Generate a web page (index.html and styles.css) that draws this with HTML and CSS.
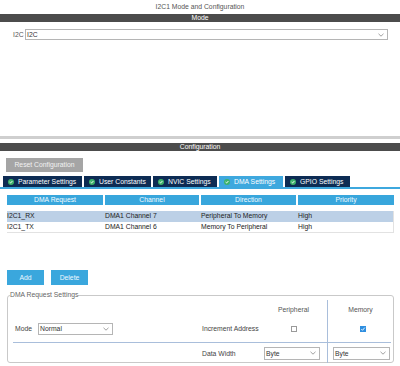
FILE: index.html
```html
<!DOCTYPE html>
<html>
<head>
<meta charset="utf-8">
<link rel="stylesheet" href="styles.css">
</head>
<body>
<div class="title">I2C1 Mode and Configuration</div>
<div class="bar">Mode</div>
<div class="mode-body">
  <div class="mode-row">
    <span class="lbl">I2C</span>
    <div class="select wide"><span>I2C</span><svg class="chev" width="6" height="4" viewBox="0 0 6 4"><path d="M0.5 0.8 L3 3.2 L5.5 0.8" fill="none" stroke="#888" stroke-width="0.8"/></svg></div>
  </div>
</div>
<div class="splitter"></div>
<div class="bar config-bar">Configuration</div>
<div class="config-body">
  <div class="reset">Reset Configuration</div>
  <div class="tabs">
    <div class="tab t1"><svg class="ok" viewBox="0 0 6 6"><circle cx="3" cy="3" r="3" fill="#3db36b"/><path d="M1.6 3.1 L2.6 4 L4.4 2" fill="none" stroke="#fff" stroke-width="0.9"/></svg>Parameter Settings</div>
    <div class="tab t2"><svg class="ok" viewBox="0 0 6 6"><circle cx="3" cy="3" r="3" fill="#3db36b"/><path d="M1.6 3.1 L2.6 4 L4.4 2" fill="none" stroke="#fff" stroke-width="0.9"/></svg>User Constants</div>
    <div class="tab t3"><svg class="ok" viewBox="0 0 6 6"><circle cx="3" cy="3" r="3" fill="#3db36b"/><path d="M1.6 3.1 L2.6 4 L4.4 2" fill="none" stroke="#fff" stroke-width="0.9"/></svg>NVIC Settings</div>
    <div class="tab t4 active"><svg class="ok" viewBox="0 0 6 6"><circle cx="3" cy="3" r="3" fill="#3db36b"/><path d="M1.6 3.1 L2.6 4 L4.4 2" fill="none" stroke="#fff" stroke-width="0.9"/></svg>DMA Settings</div>
    <div class="tab t5"><svg class="ok" viewBox="0 0 6 6"><circle cx="3" cy="3" r="3" fill="#3db36b"/><path d="M1.6 3.1 L2.6 4 L4.4 2" fill="none" stroke="#fff" stroke-width="0.9"/></svg>GPIO Settings</div>
  </div>
  <div class="tabline"></div>
  <div class="table">
    <div class="thead">
      <div>DMA Request</div><div>Channel</div><div>Direction</div><div>Priority</div>
    </div>
    <div class="tbody">
      <div class="trow sel"><div>I2C1_RX</div><div>DMA1 Channel 7</div><div>Peripheral To Memory</div><div>High</div></div>
      <div class="trow"><div>I2C1_TX</div><div>DMA1 Channel 6</div><div>Memory To Peripheral</div><div>High</div></div>
    </div>
  </div>
  <div class="buttons">
    <div class="btn">Add</div>
    <div class="btn">Delete</div>
  </div>
  <fieldset class="settings">
    <legend>DMA Request Settings</legend>
    <div class="grid">
      <div class="cell"></div>
      <div class="cell"></div>
      <div class="cell center head">Peripheral</div>
      <div class="cell center head mem">Memory</div>

      <div class="cell"><span class="lbl2">Mode</span><div class="select mode"><span>Normal</span><svg class="chev" width="6" height="4" viewBox="0 0 6 4"><path d="M0.5 0.8 L3 3.2 L5.5 0.8" fill="none" stroke="#888" stroke-width="0.8"/></svg></div></div>
      <div class="cell txt">Increment Address</div>
      <div class="cell center"><span class="cb"></span></div>
      <div class="cell center mem"><svg class="cbx" viewBox="0 0 6 6"><rect width="6" height="6" fill="#2f8fe0"/><path d="M1.3 3.1 L2.5 4.3 L4.8 1.6" fill="none" stroke="#fff" stroke-width="0.9"/></svg></div>

      <div class="hline"></div>

      <div class="cell"></div>
      <div class="cell txt">Data Width</div>
      <div class="cell"><div class="select dw"><span>Byte</span><svg class="chev" width="6" height="4" viewBox="0 0 6 4"><path d="M0.5 0.8 L3 3.2 L5.5 0.8" fill="none" stroke="#888" stroke-width="0.8"/></svg></div></div>
      <div class="cell mem"><div class="select dw2"><span>Byte</span><svg class="chev" width="6" height="4" viewBox="0 0 6 4"><path d="M0.5 0.8 L3 3.2 L5.5 0.8" fill="none" stroke="#888" stroke-width="0.8"/></svg></div></div>
    </div>
  </fieldset>
</div>
</body>
</html>
```
FILE: styles.css
```css
* { box-sizing: border-box; }
html, body { margin: 0; padding: 0; background: #fff; }
body {
  width: 400px;
  height: 366px;
  overflow: hidden;
  font-family: "Liberation Sans", Arial, sans-serif;
  font-size: 6.8px;
  color: #333;
}
.title {
  height: 14px;
  line-height: 14px;
  text-align: center;
  color: #555;
}
.bar {
  height: 8px;
  line-height: 8px;
  background: #4c4c4c;
  color: #fff;
  text-align: center;
}
.mode-body {
  height: 114px;
  padding-top: 7px;
}
.mode-row {
  display: flex;
  align-items: center;
  padding-left: 13px;
}
.lbl { width: 12px; color: #555; }
.select {
  display: flex;
  align-items: center;
  justify-content: space-between;
  background: #fff;
  border: 1px solid #b5b5b5;
  padding: 0 3px 0 1px;
  color: #333;
}
.select.wide { width: 363px; height: 11px; }
.chev { width: 6px; height: 4px; }
.splitter {
  height: 3px;
  background: #cfcfcf;
  margin-bottom: 4px;
}
.config-body { padding-top: 7px; }
.reset {
  margin-left: 6px;
  width: 77px;
  height: 14px;
  line-height: 14px;
  background: #a5a5a5;
  color: #f2f2f2;
  text-align: center;
}
.tabs {
  display: flex;
  gap: 2px;
  margin-top: 4px;
  padding-left: 3px;
  height: 11px;
}
.tab {
  display: flex;
  align-items: center;
  gap: 4px;
  padding-left: 5px;
  background: #0d2c54;
  color: #fff;
  white-space: nowrap;
}
.tab.active { background: #3ea8de; }
.t1 { width: 79px; }
.t2 { width: 67px; }
.t3 { width: 64px; }
.t4 { width: 64px; }
.t5 { width: 65px; }
.ok { width: 6px; height: 6px; flex: none; }
.tabline { height: 2px; background: #3ea8de; }
.table { margin: 6px 6px 0 7px; }
.thead {
  display: grid;
  grid-template-columns: 96px 94px 95px 96px;
  gap: 2px;
  height: 10px;
}
.thead > div {
  background: #38a6dc;
  color: #f4fbff;
  text-align: center;
  line-height: 10px;
}
.tbody {
  margin-top: 6px;
  border: 1px solid #e2e2e2;
  border-top: none;
  border-left: none;
}
.trow {
  display: grid;
  grid-template-columns: 98px 96px 97px 96px;
  height: 10.5px;
  line-height: 10.5px;
  color: #222;
}
.trow.sel { background: #bcd0e6; }
.trow > div { white-space: nowrap; }
.buttons {
  display: flex;
  gap: 7px;
  margin: 37px 0 0 7px;
}
.btn {
  width: 37px;
  height: 15px;
  line-height: 15px;
  background: #3aa7dd;
  color: #eef8ff;
  text-align: center;
}
.settings {
  margin: 6px 6px 0 7px;
  padding: 0;
  min-width: 0;
  border: 1px solid #c9c9c9;
  border-radius: 3px;
  height: 72px;
}
.settings legend {
  padding: 0;
  margin-left: 2px;
  color: #666;
  line-height: 8px;
}
.grid {
  display: grid;
  grid-template-columns: 189px 63px 67px 66px;
  grid-template-rows: 15px 27px 1px 20px;
  margin-top: 1px;
}
.cell { display: flex; align-items: center; }
.center { justify-content: center; }
.mem { border-left: 1px solid #a9bedb; }
.head { color: #555; padding-top: 3px; }
.txt { padding-left: 5px; color: #444; }
.lbl2 { margin-left: 7px; width: 23px; color: #444; }
.select.mode { width: 75px; height: 12px; }
.cb {
  width: 6px; height: 6px;
  border: 1px solid #9a9a9a;
  background: #fff;
  display: block;
  margin-left: 1px;
}
.cbx { width: 6px; height: 6px; margin-left: 4px; }
.hline {
  grid-column: 1 / 5;
  background: #a9bedb;
  margin: 0 2px 0 5px;
}
.select.dw { width: 56px; height: 13px; margin-left: 4px; }
.select.dw2 { width: 57px; height: 13px; margin-left: 5px; }
```
